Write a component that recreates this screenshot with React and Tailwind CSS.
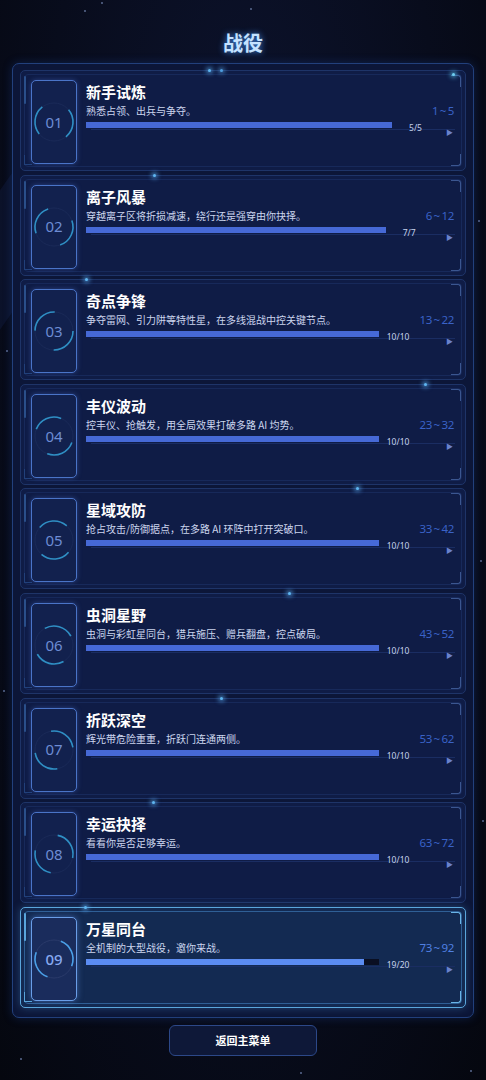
import React from "react";

const campaigns = [
  { no: "01", title: "新手试炼", desc: "熟悉占领、出兵与争夺。", done: 5, total: 5, range: [1, 5], rot: -40, dot: 207 },
  { no: "02", title: "离子风暴", desc: "穿越离子区将折损减速，绕行还是强穿由你抉择。", done: 7, total: 7, range: [6, 12], rot: -20, dot: 152 },
  { no: "03", title: "奇点争锋", desc: "争夺雷网、引力阱等特性星，在多线混战中控关键节点。", done: 10, total: 10, range: [13, 22], rot: 0, dot: 84 },
  { no: "04", title: "丰仪波动", desc: "控丰仪、抢触发，用全局效果打破多路 AI 均势。", done: 10, total: 10, range: [23, 32], rot: 20, dot: 423 },
  { no: "05", title: "星域攻防", desc: "抢占攻击/防御据点，在多路 AI 环阵中打开突破口。", done: 10, total: 10, range: [33, 42], rot: 40, dot: 355 },
  { no: "06", title: "虫洞星野", desc: "虫洞与彩虹星同台，猎兵施压、赠兵翻盘，控点破局。", done: 10, total: 10, range: [43, 52], rot: 60, dot: 287 },
  { no: "07", title: "折跃深空", desc: "辉光带危险重重，折跃门连通两侧。", done: 10, total: 10, range: [53, 62], rot: 80, dot: 219 },
  { no: "08", title: "幸运抉择", desc: "看看你是否足够幸运。", done: 10, total: 10, range: [63, 72], rot: 100, dot: 151 },
  { no: "09", title: "万星同台", desc: "全机制的大型战役，邀你来战。", done: 19, total: 20, range: [73, 92], rot: 110, dot: 83, active: true },
];

const stars = [
  [84, 10], [250, 8], [101, 2], [440, 110], [478, 220], [6, 350], [480, 560], [3, 690], [482, 820], [20, 1058], [470, 1070], [300, 1072],
];

function Ring({ rot, active }) {
  return (
    <svg width="46" height="46" viewBox="0 0 46 46" className="absolute left-1/2 top-1/2 -translate-x-1/2 -translate-y-1/2">
      <circle cx="23" cy="23" r="19" fill="none" stroke={active ? "#2a3a6a" : "#1a2a58"} strokeWidth="1" />
      <circle
        cx="23"
        cy="23"
        r="19"
        fill="none"
        stroke={active ? "#4aa0e8" : "#2f8fc4"}
        strokeWidth="1.6"
        strokeDasharray="30 29.7"
        transform={`rotate(${rot} 23 23)`}
      />
    </svg>
  );
}

function CampaignCard({ c }) {
  const pct = (c.done / c.total) * 100;
  return (
    <div
      className={`relative h-[101px] rounded-[5px] border ${
        c.active
          ? "border-[#5aa6dc] bg-[#132a52] shadow-[0_0_8px_rgba(80,160,230,0.35)]"
          : "border-[#1e3468] bg-[#0f1c46]"
      }`}
    >
      {/* inner frame */}
      <div
        className={`pointer-events-none absolute inset-[3px] rounded-[4px] border ${
          c.active ? "border-[#2f5f96]" : "border-[#17295a]"
        }`}
      />
      {/* corner brackets */}
      <div className={`absolute right-[4px] top-[4px] h-[12px] w-[10px] rounded-tr-[3px] border-r border-t ${c.active ? "border-[#6ab4e6]" : "border-[#3b5690]"}`} />
      <div className={`absolute bottom-[4px] right-[4px] h-[12px] w-[10px] rounded-br-[3px] border-b border-r ${c.active ? "border-[#6ab4e6]" : "border-[#3b5690]"}`} />
      <div className={`absolute left-[3px] top-[5px] h-[28px] w-[2px] rounded-full ${c.active ? "bg-[#5aa6dc]" : "bg-[#2a4f8a]"}`} />
      <div className={`absolute bottom-[5px] left-[3px] h-[10px] w-[8px] border-b border-l ${c.active ? "border-[#5aa6dc]" : "border-[#21407a]"}`} />
      {/* faint scan line */}
      <div className="absolute left-[70px] right-[10px] top-[58px] h-px bg-[#1a2d62]" />
      {/* top glow dot */}
      <div
        className="absolute top-[-2px] h-[3px] w-[3px] rounded-full bg-[#5fb6f0] shadow-[0_0_4px_2px_rgba(90,170,240,0.6)]"
        style={{ left: c.dot - 20 }}
      />
      {c.no === "01" && (
        <>
          <div className="absolute right-[10px] top-[2px] h-[3px] w-[3px] rounded-full bg-[#6fd0f0] shadow-[0_0_4px_2px_rgba(90,200,240,0.6)]" />
          <div className="absolute left-[199px] top-[-2px] h-[3px] w-[3px] rounded-full bg-[#4f9ee0] shadow-[0_0_4px_2px_rgba(90,170,240,0.5)]" />
        </>
      )}

      <div className="relative flex h-full items-start pl-[10px] pr-[11px] pt-[9px]">
        {/* number box */}
        <div
          className={`relative h-[84px] w-[46px] shrink-0 rounded-[5px] border-[1.5px] ${
            c.active
              ? "border-[#6a9ee8] bg-[#1a2c5c] shadow-[0_0_6px_rgba(100,150,240,0.5)]"
              : "border-[#4a74c8] bg-[#12214e] shadow-[0_0_5px_rgba(80,120,220,0.4)]"
          }`}
        >
          <Ring rot={c.rot} active={c.active} />
          <span
            className={`absolute inset-0 flex items-center justify-center font-['Noto_Sans',sans-serif] text-[15px] ${
              c.active ? "font-medium text-[#86a8f0]" : "text-[#6d8cd4]"
            }`}
          >
            {c.no}
          </span>
        </div>

        {/* middle column */}
        <div className="ml-[9px] flex min-w-0 flex-1 flex-col">
          <div className="mt-[1px] text-[15px] font-bold leading-[22px] text-white">{c.title}</div>
          <div className="mt-[1px] whitespace-nowrap text-[10px] leading-[14px] text-[#ccd6ee]">{c.desc}</div>
          <div className="mt-[4px] flex items-center">
            <div className={`h-[6px] flex-1 ${c.active ? "bg-[#0a0f22]" : "bg-[#0c1638]"}`}>
              <div
                className={`h-full ${c.active ? "bg-[#5b8cf2]" : "bg-[#4669d6]"}`}
                style={{ width: `${pct}%` }}
              />
            </div>
            <div className="ml-[8px] min-w-[22px] translate-y-[3px] text-right font-['Noto_Sans',sans-serif] text-[8.5px] leading-[6px] text-[#c6d2ec]">
              {c.done}/{c.total}
            </div>
          </div>
        </div>

        {/* right column */}
        <div className="ml-[10px] flex flex-col items-end pt-[23px]">
          <div className={`whitespace-nowrap font-['Noto_Sans',sans-serif] text-[11.5px] leading-[16px] tracking-[-0.3px] ${c.active ? "text-[#5080e2]" : "text-[#3a62c6]"}`}>
            {c.range[0]}{"\u2009~\u2009"}{c.range[1]}
          </div>
          <div className="mr-[1px] mt-[8px] text-[7px] leading-[10px] text-[#6a82cc]">▶</div>
        </div>
      </div>
    </div>
  );
}

export default function App() {
  return (
    <div className="relative min-h-[1080px] w-full overflow-hidden bg-[radial-gradient(ellipse_at_50%_30%,#0d1430_0%,#080c1c_60%,#05070f_100%)] font-['Noto_Sans_CJK_SC','Noto_Sans',sans-serif]">
      {stars.map(([x, y], i) => (
        <div key={i} className="absolute h-[2px] w-[2px] rounded-full bg-[#5a6a90]" style={{ left: x, top: y }} />
      ))}
      <div className="absolute left-[-40px] top-[180px] h-[160px] w-[80px] rotate-[35deg] bg-[#0f1836] opacity-60" />

      <div className="relative flex flex-col items-center">
        <h1 className="mt-[28px] h-[30px] text-[20px] font-bold leading-[30px] text-[#c4e2ff] [text-shadow:0_0_6px_rgba(70,150,255,0.9)]">
          战役
        </h1>

        <div className="mt-[5px] w-[462px] rounded-[7px] border border-[#22407c] bg-[#0c1638] px-[7px] pb-[9px] pt-[6px] shadow-[0_0_10px_rgba(30,70,160,0.35)]">
          <div className="flex flex-col gap-[3.6px]">
            {campaigns.map((c) => (
              <CampaignCard key={c.no} c={c} />
            ))}
          </div>
        </div>

        <button className="mt-[7px] h-[31px] w-[148px] rounded-[6px] border border-[#2c4888] bg-[#0e1838] text-[11px] font-bold text-white">
          返回主菜单
        </button>
      </div>
    </div>
  );
}
